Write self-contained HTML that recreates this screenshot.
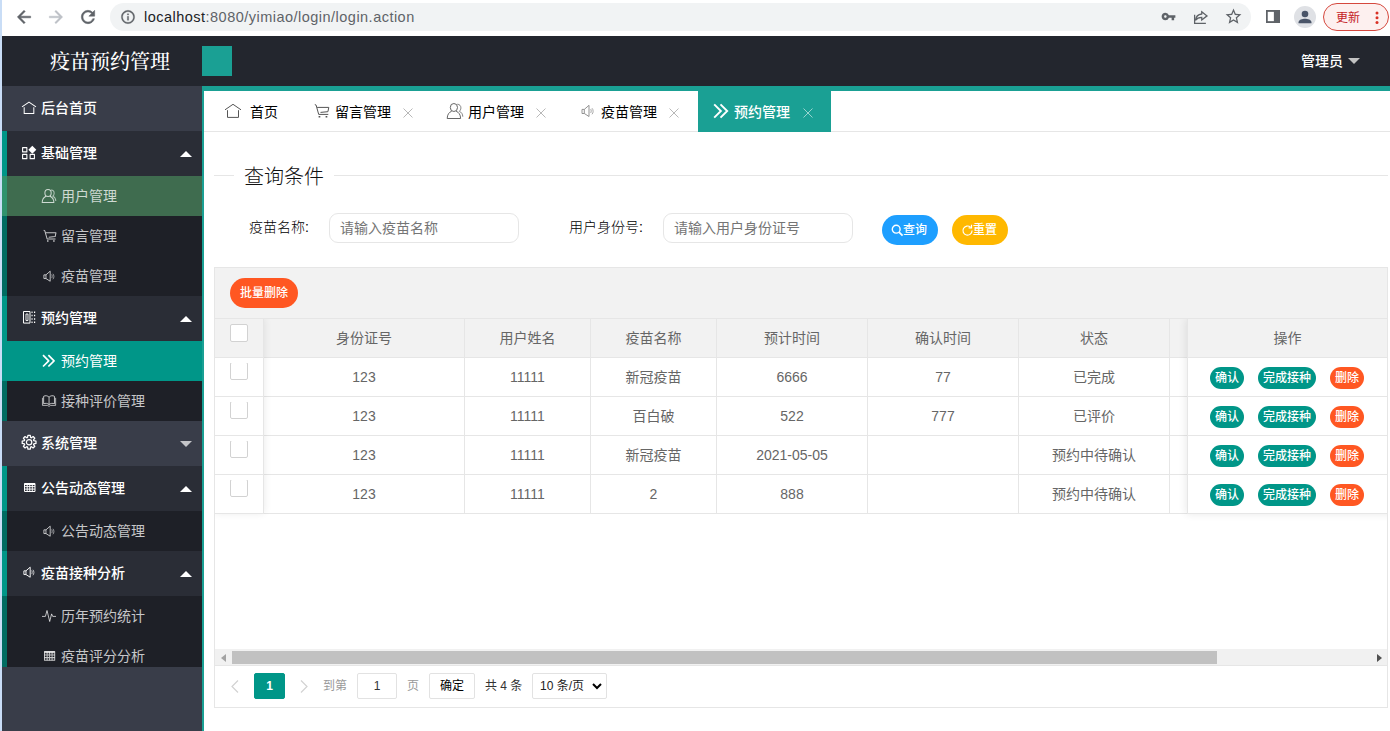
<!DOCTYPE html>
<html lang="zh-CN">
<head>
<meta charset="utf-8">
<title>疫苗预约管理</title>
<style>
*{box-sizing:border-box;margin:0;padding:0}
html,body{width:1390px;height:731px;overflow:hidden;background:#fff}
body{position:relative;font-family:"Liberation Sans","Noto Sans CJK SC",sans-serif;font-size:14px;color:#333;line-height:1}
.abs{position:absolute}
svg{display:block}
/* ---------- browser chrome ---------- */
#chrome{position:absolute;left:0;top:0;width:1390px;height:36px;background:#fff}
#winedge{position:absolute;left:0;top:0;width:2px;height:731px;background:#c9ddf6;z-index:50}
#omni{position:absolute;left:110px;top:3px;width:1141px;height:28px;border-radius:14px;background:#f1f3f4}
#url{position:absolute;left:144px;top:0;height:34px;line-height:34px;font-size:14.5px;color:#5f6368;white-space:nowrap;letter-spacing:.48px}
#url b{font-weight:400;color:#202124}
#upd{position:absolute;left:1323px;top:3px;width:66px;height:28px;border:1px solid #d5483e;border-radius:14px;background:#fdf0ef}
#upd span{position:absolute;left:12px;top:0;line-height:28px;font-size:12px;color:#c5221f}
/* ---------- app header ---------- */
#hdr{position:absolute;left:2px;top:36px;width:1388px;height:50px;background:#23262e}
#logo{position:absolute;left:0;top:0;width:216px;height:50px;line-height:52px;text-align:center;color:#fff;font-size:20px;font-weight:500;font-family:"Liberation Serif","Noto Serif CJK SC",serif}
#sq{position:absolute;left:200px;top:10px;width:30px;height:30px;background:#1aa094}
#adm{position:absolute;left:1299px;top:0;height:50px;line-height:50px;color:#fff;font-size:14px;font-weight:500}
#adm i{position:absolute;left:47px;top:22px;width:0;height:0;border:6px solid transparent;border-top-color:#c2c2c2;border-bottom-width:0}
/* ---------- sidebar ---------- */
#side{position:absolute;left:2px;top:86px;width:200px;height:645px;background:#393d49;overflow:hidden}
#nav{position:absolute;left:0;top:0;width:200px;height:581px;overflow:hidden}
.ni{position:relative;width:200px;height:45px;line-height:45px;color:#fff;font-size:14px;font-weight:500;white-space:nowrap}
.ni .ic{position:absolute;left:19px;top:15px}
.ni .tx{position:absolute;left:39px;top:0}
.grp{position:relative;background:rgba(0,0,0,.26)}
.grp:before{content:"";position:absolute;left:0;top:0;width:5px;height:100%;background:#009688}
.kids{position:relative;background:rgba(0,0,0,.28)}
.ci{position:relative;width:200px;height:40px;line-height:40px;color:rgba(255,255,255,.75);font-size:14px;white-space:nowrap}
.ci .ic{position:absolute;left:39px;top:13px}
.ci .tx{position:absolute;left:59px;top:0}
.ci.hov{background:rgba(95,184,120,.5)}
.ci.sel{background:#009688;color:#fff}
.arr{position:absolute;right:10px;top:20px;width:0;height:0;border:6px solid transparent}
.arr.up{border-bottom-color:#fff;border-top-width:0}
.arr.dn{border-top-color:rgba(255,255,255,.7);border-bottom-width:0;top:20px}
/* ---------- body ---------- */
#main{position:absolute;left:202px;top:86px;width:1188px;height:645px;background:#fff;border-top:5px solid #1aa094;border-left:2px solid #1aa094}
#tabs{position:absolute;left:0;top:0;width:1186px;height:41px;border-bottom:1px solid #e6e6e6}
.tab{position:absolute;top:0;height:40px;line-height:42px;font-size:14px;color:#000;white-space:nowrap}
.tab .ic{position:absolute;top:12px}
.tab .x{position:absolute;top:17px}
.tab.act{background:#1aa094;color:#fff;height:41px;font-weight:500}

/* main content: coordinates inside #main are page coords minus (204,91) */
#fs-l1{position:absolute;left:10px;top:84px;width:20px;height:1px;background:#e6e6e6}
#fs-l2{position:absolute;left:130px;top:84px;width:1054px;height:1px;background:#e6e6e6}
#legend{position:absolute;left:40px;top:71px;font-size:20px;line-height:30px;color:#111;font-weight:300}
.lbl{position:absolute;top:122px;height:30px;line-height:28px;font-size:14px;color:#000;font-weight:300}
.inp{position:absolute;top:122px;width:190px;height:30px;border:1px solid #e6e6e6;border-radius:9px;background:#fff;padding-left:10px;line-height:28px;font-size:14px;color:#757575}
.btn{position:absolute;height:30px;line-height:31px;font-weight:500;border-radius:15px;color:#fff;font-size:12px;text-align:center;white-space:nowrap}
#tbl{position:absolute;left:10px;top:176px;width:1174px;height:441px;border:1px solid #e6e6e6;background:#fff;overflow:hidden}
#tool{position:absolute;left:0;top:0;width:1172px;height:51px;background:#f2f2f2;border-bottom:1px solid #e6e6e6}
#thead{position:absolute;left:0;top:51px;width:1172px;height:39px;background:#f2f2f2;border-bottom:1px solid #e6e6e6}
.row{position:absolute;left:0;width:1172px;height:39px;border-bottom:1px solid #e6e6e6;background:#fff}
.c{position:absolute;top:0;height:38px;line-height:38px;text-align:center;font-size:14px;color:#666;border-right:1px solid #e6e6e6;white-space:nowrap}
.cb{position:absolute;left:15px;top:5px;width:18px;height:18px;border:1px solid #d2d2d2;border-radius:2px;background:#fff}
.cbw{position:absolute;left:15px;top:5px;width:18px;height:17px;overflow:hidden}
.cbw .cb{left:0;top:-1px}
.shr{position:absolute;left:48px;top:0;width:8px;height:100%;background:linear-gradient(to right,rgba(0,0,0,.07),rgba(0,0,0,0));pointer-events:none}
.shl{position:absolute;left:962px;top:0;width:9px;height:100%;background:linear-gradient(to left,rgba(0,0,0,.07),rgba(0,0,0,0))}
.ob{position:absolute;top:9px;height:22px;line-height:22px;font-weight:500;border-radius:11px;color:#fff;font-size:12px;text-align:center;white-space:nowrap}
#shw{position:absolute;left:0;top:51px;width:1172px;height:330px;overflow:hidden;pointer-events:none}
.g{background:#009688}.r{background:#ff5722}
#sb{position:absolute;left:0;top:381px;width:1172px;height:17px;background:#f1f1f1}
#sb .th{position:absolute;left:17px;top:2px;width:985px;height:13px;background:#c1c1c1}
#pg{position:absolute;left:0;top:397px;width:1172px;height:42px;border-top:1px solid #e6e6e6;background:#fff;font-size:12px;color:#999}
#pg .t{position:absolute;top:7px;height:26px;line-height:26px;white-space:nowrap}
#pg .bx{position:absolute;top:7px;height:26px;line-height:24px;border:1px solid #e2e2e2;border-radius:2px;text-align:center;color:#333;background:#fff}
</style>
</head>
<body>
<div id="winedge"></div>
<div id="chrome">
  <svg class="abs" style="left:14px;top:7px" width="20" height="20" viewBox="0 0 24 24"><path d="M20 11H7.83l5.59-5.59L12 4l-8 8 8 8 1.41-1.41L7.83 13H20v-2z" fill="#5f6368" stroke="#5f6368" stroke-width=".6"/></svg>
  <svg class="abs" style="left:46px;top:7px" width="20" height="20" viewBox="0 0 24 24"><path d="M12 4l-1.41 1.41L16.17 11H4v2h12.17l-5.58 5.59L12 20l8-8z" fill="#bdc1c6" stroke="#bdc1c6" stroke-width=".5"/></svg>
  <svg class="abs" style="left:78px;top:7px" width="20" height="20" viewBox="0 0 24 24"><path d="M17.65 6.35A7.958 7.958 0 0 0 12 4c-4.42 0-7.99 3.58-7.99 8s3.57 8 7.99 8c3.73 0 6.84-2.55 7.73-6h-2.08A5.99 5.99 0 0 1 12 18c-3.31 0-6-2.69-6-6s2.690-6 6-6c1.660 0 3.140.69 4.220 1.780L13 11h7V4l-2.350 2.350z" fill="#5f6368" stroke="#5f6368" stroke-width=".6"/></svg>
  <div id="omni"></div>
  <svg class="abs" style="left:120px;top:9px" width="16" height="16" viewBox="0 0 24 24"><path d="M11 7h2v2h-2zm0 4h2v6h-2zm1-9C6.48 2 2 6.48 2 12s4.48 10 10 10 10-4.480 10-10S17.520 2 12 2zm0 18c-4.410 0-8-3.590-8-8s3.590-8 8-8 8 3.590 8 8-3.590 8-8 8z" fill="#5f6368" stroke="#5f6368" stroke-width=".4"/></svg>
  <div id="url"><b>localhost</b>:8080/yimiao/login/login.action</div>
  <svg class="abs" style="left:1161px;top:9px" width="15" height="15" viewBox="0 0 24 24"><path d="M12.650 10A5.990 5.990 0 0 0 7 6c-3.310 0-6 2.690-6 6s2.690 6 6 6a5.990 5.990 0 0 0 5.650-4H17v4h4v-4h2v-4H12.650zM7 14c-1.100 0-2-.9-2-2s.9-2 2-2 2 .9 2 2-.9 2-2 2z" fill="#5f6368"/></svg>
  <svg class="abs" style="left:1192px;top:8px" width="18" height="18" viewBox="0 0 24 24" fill="none" stroke="#5f6368" stroke-width="1.7"><path d="M13 5l7 5.500-7 5.500v-3.500c-4 0-6.500 1.200-8.500 4 .6-4.500 3-8 8.500-8.500z"/><path d="M3.500 9v11.500h15"/></svg>
  <svg class="abs" style="left:1224px;top:7px" width="19" height="19" viewBox="0 0 24 24"><path d="M22 9.240l-7.190-.62L12 2 9.190 8.630 2 9.240l5.460 4.730L5.820 21 12 17.270 18.180 21l-1.630-7.030L22 9.240zM12 15.400l-3.760 2.270 1-4.280-3.320-2.880 4.380-.38L12 6.100l1.710 4.040 4.380.38-3.320 2.880 1 4.280L12 15.400z" fill="#5f6368"/></svg>
  <svg class="abs" style="left:1266px;top:10px" width="14" height="13" viewBox="0 0 16 14" preserveAspectRatio="none"><rect x="1" y="1" width="14" height="12" fill="none" stroke="#5f6368" stroke-width="2"/><rect x="9" y="1" width="6" height="12" fill="#5f6368"/></svg>
  <svg class="abs" style="left:1294px;top:6px" width="22" height="22" viewBox="0 0 22 22"><circle cx="11" cy="11" r="11" fill="#dfe1e5"/><circle cx="11" cy="8" r="3.300" fill="#4a5568"/><path d="M4.500 16.500c0-2.800 4-3.800 6.500-3.800s6.500 1 6.500 3.800v.8h-13z" fill="#4a5568"/></svg>
  <div id="upd"><span>更新</span></div>
  <svg class="abs" style="left:1375px;top:10px" width="4" height="16" viewBox="0 0 4 16"><circle cx="2" cy="3" r="1.500" fill="#d93025"/><circle cx="2" cy="7.800" r="1.500" fill="#d93025"/><circle cx="2" cy="12.600" r="1.500" fill="#d93025"/></svg>
</div>
<div id="hdr">
  <div id="logo">疫苗预约管理</div>
  <div id="sq"></div>
  <div id="adm">管理员<i></i></div>
</div>
<div id="side"><div id="nav">
<div class="ni"><svg class="abs" style="left:20px;top:15px;overflow:visible" width="14" height="14" viewBox="0 0 16 16" fill="none" stroke="currentColor" stroke-width="1.15" stroke-linejoin="round"><path d="M0 6.800L8 1.300l8 5.500"/><path d="M2.500 7.200v7.200h11V7.200"/></svg><span class="tx">后台首页</span></div>
<div class="grp"><div class="ni"><svg class="abs" style="left:20.2px;top:15px;overflow:visible" width="13.8" height="12.7" viewBox="0 0 13.900 12.700" fill="none" stroke="currentColor" stroke-width="1.1" stroke-linejoin="round"><rect x=".6" y="1.600" width="4.300" height="4.300"/><rect x=".6" y="8.400" width="4.300" height="4.300"/><rect x="8.200" y="8.400" width="4.300" height="4.300"/><path d="M10.4 -.4l4 4.1-4 4.1-4-4.1z" fill="currentColor" stroke="none"/></svg><span class="tx">基础管理</span><i class="arr up"></i></div><div class="kids"><div class="ci hov"><svg class="abs" style="left:40.2px;top:12.7px;overflow:visible" width="14" height="14" viewBox="0 0 16 16" fill="none" stroke="currentColor" stroke-width="1.15" stroke-linejoin="round"><ellipse cx="6.900" cy="4.500" rx="3.600" ry="4"/><path d="M4.700 8.200C2 9.300.3 11.500.2 15.500h13.400c-.1-4-1.800-6.200-4.500-7.300"/><path d="M10.300 1.200c2.300.1 3.600 1.700 3.600 3.600 0 1.500-.7 2.800-1.600 3.500 2.200.9 3.400 2.700 3.500 5.400" opacity=".8"/></svg><span class="tx">用户管理</span></div><div class="ci "><svg class="abs" style="left:40.5px;top:13.2px;overflow:visible" width="14" height="14" viewBox="0 0 16 16" fill="none" stroke="currentColor" stroke-width="1.15" stroke-linejoin="round"><path d="M0.800 1.500l1.300.6 2.600 9.300h9.600"/><path d="M3.100 4.400h11.700l-.9 4.300-7.400.7"/><path d="M4.600 13.700h1.700M11.600 13.700h1.700" stroke-width="1.600"/></svg><span class="tx">留言管理</span></div><div class="ci "><svg class="abs" style="left:40.6px;top:13.6px;overflow:visible" width="12.6" height="12.6" viewBox="0 0 14 14" fill="none" stroke="currentColor" stroke-width="1.05" stroke-linejoin="round"><path d="M1 5.400h2.300v4.100H1z"/><path d="M3.300 5.400L8 1.300v11.200L3.300 9.500"/><path d="M9.600 5c.8.800.8 3.200 0 4M11 4.200c1.500 1.500 1.500 4.600 0 6.100" opacity=".75"/></svg><span class="tx">疫苗管理</span></div></div></div>
<div class="grp"><div class="ni"><svg class="abs" style="left:21px;top:15px;overflow:visible" width="12.2" height="12.6" viewBox="0 0 12.200 12.600" fill="none" stroke="currentColor" stroke-width="1" stroke-linejoin="round"><rect x=".5" y=".5" width="6.500" height="11.600"/><rect x="3" y="3" width="2" height="6.500" stroke-width=".9"/><path d="M8.500 1.300h1.100M8.500 4.600h1.100M8.500 7.900h1.100M8.500 11.200h1.100M11 1.300h1.200M11 4.600h1.200M11 7.900h1.200M11 11.200h1.200" stroke-width="1.500"/></svg><span class="tx">预约管理</span><i class="arr up"></i></div><div class="kids"><div class="ci sel"><svg class="abs" style="left:40.2px;top:12.9px;overflow:visible" width="13.6" height="13.6" viewBox="0 0 16 16" fill="none" stroke="currentColor" stroke-width="2" stroke-linejoin="round"><path d="M1.200 1.300L7.900 8l-6.700 6.700M7.500 1.300L14.200 8l-6.700 6.700"/></svg><span class="tx">预约管理</span></div><div class="ci "><svg class="abs" style="left:40.3px;top:14.2px;overflow:visible" width="14.1" height="11" viewBox="0 0 15.6 11" preserveAspectRatio="none" fill="none" stroke="currentColor" stroke-width="1" stroke-linejoin="round"><path d="M7.8 2.2C6.3.6 3.6.3 1.8 1.3v7.5c1.8-.8 4.5-.6 6 .8 1.5-1.4 4.2-1.6 6-.8V1.3c-1.8-1-4.5-.7-6 .9z"/><path d="M7.8 2.2v7.3"/><path d="M.5 2.8v7.600h5.700l1.600 1 1.600-1h5.700V2.8" stroke-width=".9"/></svg><span class="tx">接种评价管理</span></div></div></div>
<div class="ni"><svg class="abs" style="left:19.9px;top:14px;overflow:visible" width="14.2" height="14.5" viewBox="0 0 14.200 14.500" fill="none" stroke="currentColor" stroke-width="1" stroke-linejoin="round"><path d="M5.92 0.35L8.28 0.35L8.63 2.49L9.39 2.80L11.14 1.53L12.82 3.21L11.55 4.96L11.86 5.72L14.00 6.07L14.00 8.43L11.86 8.78L11.55 9.54L12.82 11.29L11.14 12.97L9.39 11.70L8.63 12.01L8.28 14.15L5.92 14.15L5.57 12.01L4.81 11.70L3.06 12.97L1.38 11.29L2.65 9.54L2.34 8.78L0.20 8.43L0.20 6.07L2.34 5.72L2.65 4.96L1.38 3.21L3.06 1.53L4.81 2.80L5.57 2.49z" stroke-width="1.25"/><circle cx="7.1" cy="7.25" r="2.7" stroke-width="1.2"/></svg><span class="tx">系统管理</span><i class="arr dn"></i></div>
<div class="grp"><div class="ni"><svg class="abs" style="left:21.5px;top:17px;overflow:visible" width="11.5" height="9" viewBox="0 0 11.500 9" fill="none" stroke="currentColor" stroke-width="1" stroke-linejoin="round"><rect x=".5" y=".5" width="10.5" height="8" stroke-width="1"/><path d="M.5 1.2h10.5" stroke-width="1.6"/><path d="M.5 3.6h10.5M.5 6.100h10.5M3.200 1v7.500M5.750 1v7.500M8.300 1v7.500" stroke-width=".95"/></svg><span class="tx">公告动态管理</span><i class="arr up"></i></div><div class="kids"><div class="ci "><svg class="abs" style="left:40.6px;top:13.6px;overflow:visible" width="12.6" height="12.6" viewBox="0 0 14 14" fill="none" stroke="currentColor" stroke-width="1.05" stroke-linejoin="round"><path d="M1 5.400h2.300v4.100H1z"/><path d="M3.300 5.400L8 1.300v11.200L3.300 9.500"/><path d="M9.600 5c.8.800.8 3.200 0 4M11 4.200c1.500 1.500 1.500 4.600 0 6.100" opacity=".75"/></svg><span class="tx">公告动态管理</span></div></div></div>
<div class="grp"><div class="ni"><svg class="abs" style="left:20.9px;top:15.3px;overflow:visible" width="12.6" height="12.6" viewBox="0 0 14 14" fill="none" stroke="currentColor" stroke-width="1.05" stroke-linejoin="round"><path d="M1 5.400h2.300v4.100H1z"/><path d="M3.300 5.400L8 1.300v11.200L3.300 9.500"/><path d="M9.600 5c.8.800.8 3.200 0 4M11 4.200c1.500 1.500 1.500 4.600 0 6.100" opacity=".75"/></svg><span class="tx">疫苗接种分析</span><i class="arr up"></i></div><div class="kids"><div class="ci "><svg class="abs" style="left:39.9px;top:12.6px;overflow:visible" width="14" height="14" viewBox="0 0 14 14" fill="none" stroke="currentColor" stroke-width="1.1" stroke-linejoin="round"><path d="M0 7.400h3.400L5 1.500l2.700 11 1.900-7.600 1.100 2.500h3.300" stroke-width=".95"/></svg><span class="tx">历年预约统计</span></div><div class="ci "><svg class="abs" style="left:41.5px;top:14.7px;overflow:visible" width="11.2" height="9.8" viewBox="0 0 11.500 9" fill="none" stroke="currentColor" stroke-width="1" stroke-linejoin="round" preserveAspectRatio="none"><rect x=".5" y=".5" width="10.5" height="8" stroke-width="1"/><path d="M.5 1.2h10.5" stroke-width="1.6"/><path d="M.5 3.6h10.5M.5 6.100h10.5M3.200 1v7.500M5.750 1v7.500M8.300 1v7.500" stroke-width=".95"/></svg><span class="tx">疫苗评分分析</span></div></div></div>
</div></div>
<div id="main">
<div id="tabs"><div class="tab" style="left:10px;width:80px"><svg class="ic" style="left:11px;overflow:visible" width="16" height="16" viewBox="0 0 16 16" fill="none" stroke="#555" stroke-width="1"><path d="M0 6.800L8 1.300l8 5.500"/><path d="M2.500 7.200v7.200h11V7.200"/></svg><span class="abs" style="left:36px;top:0">首页</span></div><div class="tab" style="left:100px;width:130px"><svg class="ic" style="left:10px;overflow:visible" width="16" height="16" viewBox="0 0 16 16" fill="none" stroke="#555" stroke-width="1" stroke-linejoin="round"><path d="M0.800 1.500l1.300.6 2.600 9.300h9.600"/><path d="M3.100 4.400h11.700l-.9 4.300-7.400.7"/><path d="M4.600 13.700h1.700M11.600 13.700h1.700" stroke-width="1.500"/></svg><span class="abs" style="left:31px;top:0">留言管理</span><svg class="x" style="left:99px" width="10" height="10" viewBox="0 0 10 10" fill="none" stroke="#b8b8b8" stroke-width="1"><path d="M.5.500l9 9M9.500.5l-9 9"/></svg></div><div class="tab" style="left:233px;width:130px"><svg class="ic" style="left:10px;overflow:visible" width="16" height="16" viewBox="0 0 16 16" fill="none" stroke="#666" stroke-width="1" stroke-linejoin="round"><ellipse cx="6.900" cy="4.500" rx="3.600" ry="4"/><path d="M4.700 8.200C2 9.300.3 11.500.2 15.500h13.400c-.1-4-1.800-6.200-4.500-7.300"/><path d="M10.300 1.200c2.300.1 3.600 1.700 3.600 3.600 0 1.500-.7 2.800-1.600 3.500 2.200.9 3.400 2.700 3.500 5.400" opacity=".8"/></svg><span class="abs" style="left:31px;top:0">用户管理</span><svg class="x" style="left:99px" width="10" height="10" viewBox="0 0 10 10" fill="none" stroke="#b8b8b8" stroke-width="1"><path d="M.5.500l9 9M9.500.5l-9 9"/></svg></div><div class="tab" style="left:366px;width:130px"><svg class="ic" style="left:11px;top:13px;overflow:visible" width="14" height="14" viewBox="0 0 14 14" fill="none" stroke="#888" stroke-width=".9" stroke-linejoin="round"><path d="M1 5.400h2.300v4.100H1z"/><path d="M3.300 5.400L8 1.300v11.200L3.300 9.500"/><path d="M9.600 5c.8.800.8 3.200 0 4M11 4.200c1.500 1.500 1.500 4.600 0 6.100" opacity=".8"/></svg><span class="abs" style="left:31px;top:0">疫苗管理</span><svg class="x" style="left:99px" width="10" height="10" viewBox="0 0 10 10" fill="none" stroke="#b8b8b8" stroke-width="1"><path d="M.5.500l9 9M9.500.5l-9 9"/></svg></div><div class="tab act" style="left:494px;width:133px"><svg class="ic" style="left:15px;overflow:visible" width="16" height="16" viewBox="0 0 16 16" fill="none" stroke="#fff" stroke-width="1.900"><path d="M1.200 1.300L7.900 8l-6.700 6.700M7.500 1.300L14.200 8l-6.700 6.700"/></svg><span class="abs" style="left:36px;top:0">预约管理</span><svg class="x" style="left:105px" width="10" height="10" viewBox="0 0 10 10" fill="none" stroke="rgba(255,255,255,.55)" stroke-width="1"><path d="M.5.500l9 9M9.500.5l-9 9"/></svg></div></div>
<div id="fs-l1"></div><div id="fs-l2"></div><div id="legend">查询条件</div>
<div class="lbl" style="left:45px">疫苗名称:</div><div class="inp" style="left:125px">请输入疫苗名称</div>
<div class="lbl" style="left:365px">用户身份号:</div><div class="inp" style="left:459px">请输入用户身份证号</div>
<div class="btn" style="left:678px;top:124px;width:56px;background:#1e9fff"><svg class="abs" style="left:9px;top:9px" width="13" height="13" viewBox="0 0 12 12" fill="none" stroke="#fff" stroke-width="1.3"><circle cx="4.8" cy="4.8" r="3.6"/><path d="M7.4 7.4l3.3 3.3" stroke-width="1.6"/></svg><span class="abs" style="left:21px;top:0">查询</span></div>
<div class="btn" style="left:748px;top:124px;width:56px;background:#ffb800"><svg class="abs" style="left:9px;top:9px" width="13" height="13" viewBox="0 0 12 12" fill="none" stroke="#fff" stroke-width="1.1"><path d="M10.2 6a4.2 4.2 0 1 1-1.4-3.100"/><path d="M9.7.8v2.700H7" /></svg><span class="abs" style="left:21px;top:0">重置</span></div>
<div id="tbl">
<div id="tool"><div class="btn" style="left:15px;top:10px;width:68px;background:#ff5722">批量删除</div></div>
<div id="thead"><div class="c" style="left:0px;width:49px"><i class="cb"></i></div><div class="c" style="left:49px;width:201px">身份证号</div><div class="c" style="left:250px;width:126px">用户姓名</div><div class="c" style="left:376px;width:126px">疫苗名称</div><div class="c" style="left:502px;width:151px">预计时间</div><div class="c" style="left:653px;width:151px">确认时间</div><div class="c" style="left:804px;width:151px">状态</div><div class="c" style="left:972px;width:200px;border-left:1px solid #e6e6e6;border-right:0">操作</div></div>
<div class="row" style="top:90px"><div class="c c0" style="left:0;width:49px"><span class="cbw"><i class="cb"></i></span></div><div class="c" style="left:49px;width:201px">123</div><div class="c" style="left:250px;width:126px">11111</div><div class="c" style="left:376px;width:126px">新冠疫苗</div><div class="c" style="left:502px;width:151px">6666</div><div class="c" style="left:653px;width:151px">77</div><div class="c" style="left:804px;width:151px">已完成</div><div class="c" style="left:972px;width:200px;border-left:1px solid #e6e6e6;border-right:0"><span class="ob g" style="left:22px;width:34px">确认</span><span class="ob g" style="left:70px;width:58px">完成接种</span><span class="ob r" style="left:142px;width:34px">删除</span></div></div>
<div class="row" style="top:129px"><div class="c c0" style="left:0;width:49px"><span class="cbw"><i class="cb"></i></span></div><div class="c" style="left:49px;width:201px">123</div><div class="c" style="left:250px;width:126px">11111</div><div class="c" style="left:376px;width:126px">百白破</div><div class="c" style="left:502px;width:151px">522</div><div class="c" style="left:653px;width:151px">777</div><div class="c" style="left:804px;width:151px">已评价</div><div class="c" style="left:972px;width:200px;border-left:1px solid #e6e6e6;border-right:0"><span class="ob g" style="left:22px;width:34px">确认</span><span class="ob g" style="left:70px;width:58px">完成接种</span><span class="ob r" style="left:142px;width:34px">删除</span></div></div>
<div class="row" style="top:168px"><div class="c c0" style="left:0;width:49px"><span class="cbw"><i class="cb"></i></span></div><div class="c" style="left:49px;width:201px">123</div><div class="c" style="left:250px;width:126px">11111</div><div class="c" style="left:376px;width:126px">新冠疫苗</div><div class="c" style="left:502px;width:151px">2021-05-05</div><div class="c" style="left:653px;width:151px"></div><div class="c" style="left:804px;width:151px">预约中待确认</div><div class="c" style="left:972px;width:200px;border-left:1px solid #e6e6e6;border-right:0"><span class="ob g" style="left:22px;width:34px">确认</span><span class="ob g" style="left:70px;width:58px">完成接种</span><span class="ob r" style="left:142px;width:34px">删除</span></div></div>
<div class="row" style="top:207px"><div class="c c0" style="left:0;width:49px"><span class="cbw"><i class="cb"></i></span></div><div class="c" style="left:49px;width:201px">123</div><div class="c" style="left:250px;width:126px">11111</div><div class="c" style="left:376px;width:126px">2</div><div class="c" style="left:502px;width:151px">888</div><div class="c" style="left:653px;width:151px"></div><div class="c" style="left:804px;width:151px">预约中待确认</div><div class="c" style="left:972px;width:200px;border-left:1px solid #e6e6e6;border-right:0"><span class="ob g" style="left:22px;width:34px">确认</span><span class="ob g" style="left:70px;width:58px">完成接种</span><span class="ob r" style="left:142px;width:34px">删除</span></div></div>
<div id="shw"><div style="position:absolute;left:0;top:0;width:49px;height:195px;box-shadow:0 -1px 8px rgba(0,0,0,.09)"></div><div style="position:absolute;left:972px;top:0;width:210px;height:195px;box-shadow:-1px 0 8px rgba(0,0,0,.09)"></div></div>
<div id="sb"><div class="th"></div><svg class="abs" style="left:6px;top:5px" width="5" height="8" viewBox="0 0 5 8"><path d="M5 0v8L0 4z" fill="#a3a3a3"/></svg><svg class="abs" style="left:1162px;top:5px" width="5" height="8" viewBox="0 0 5 8"><path d="M0 0v8l5-4z" fill="#505050"/></svg></div>
<div id="pg"><svg class="abs" style="left:16px;top:14px" width="8" height="13" viewBox="0 0 8 13" fill="none" stroke="#d2d2d2" stroke-width="1.200"><path d="M7 .5L1 6.500l6 6"/></svg><div class="bx" style="left:39px;width:31px;background:#009688;border-color:#009688;color:#fff;font-weight:700">1</div><svg class="abs" style="left:85px;top:14px" width="8" height="13" viewBox="0 0 8 13" fill="none" stroke="#d2d2d2" stroke-width="1.200"><path d="M1 .5l6 6-6 6"/></svg><span class="t" style="left:108px">到第</span><div class="bx" style="left:142px;width:40px">1</div><span class="t" style="left:192px">页</span><div class="bx" style="left:214px;width:46px;color:#000">确定</div><span class="t" style="left:270px;color:#333">共 4 条</span><div class="bx" style="left:317px;width:75px;text-align:left;padding-left:7px;color:#222">10 条/页<svg class="abs" style="left:58.5px;top:9px" width="10" height="7" viewBox="0 0 10 7" fill="none" stroke="#000" stroke-width="2"><path d="M1 1l4 4 4-4"/></svg></div></div>
</div>
</div>
</body>
</html>
